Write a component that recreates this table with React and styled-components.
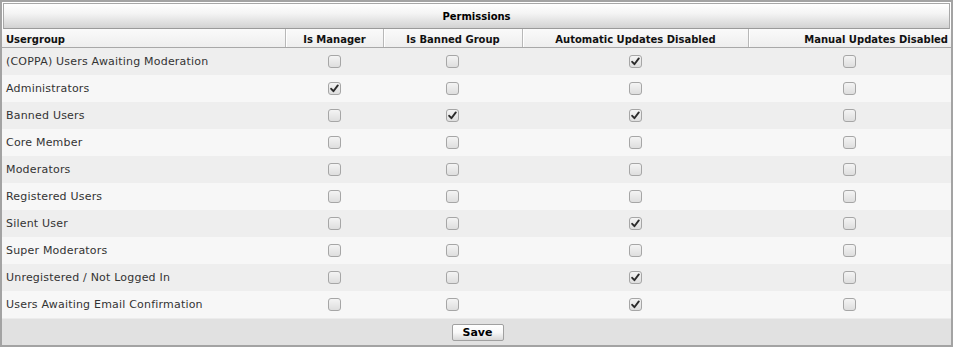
import React from "react";
import styled, { createGlobalStyle } from "styled-components";

const Global = createGlobalStyle`
  html, body { margin: 0; padding: 0; background: #ffffff; }
  body { font-family: "DejaVu Sans", Verdana, sans-serif; }
`;

const Frame = styled.div`
  width: 949px;
  border: 2px solid #a3a3a3;
  background: #ffffff;
  padding-top: 1px;
  font-family: "DejaVu Sans", Verdana, sans-serif;
  color: #333;
`;

const TitleBar = styled.div`
  margin: 0 1px;
  height: 26px;
  padding-top: 1px;
  box-sizing: border-box;
  border: 1px solid #a8a8a8;
  border-bottom-color: #9a9a9a;
  background: linear-gradient(#ffffff 0%, #f4f4f4 40%, #d2d2d2 100%);
  display: flex;
  align-items: center;
  justify-content: center;
  font-weight: bold;
  font-size: 10px;
  color: #000;
`;

const cols = "283px 98px 139px 226px 1fr";

const HeadRow = styled.div`
  display: grid;
  grid-template-columns: ${cols};
  height: 18px;
  background: linear-gradient(#fafafa, #eeeeee);
  border-bottom: 1px solid #a8a8a8;
`;

const HeadCell = styled.div`
  display: flex;
  align-items: center;
  justify-content: ${(p) => p.$align || "center"};
  padding: 2px ${(p) => (p.$align === "flex-end" ? "3px" : "4px")} 0;
  font-size: 10px;
  font-weight: bold;
  color: #111;
  border-left: ${(p) => (p.$first ? "none" : "1px solid #b8b8b8")};
  box-shadow: ${(p) => (p.$first ? "none" : "inset 1px 0 0 #ffffff")};
  white-space: nowrap;
`;

const Row = styled.div`
  display: grid;
  grid-template-columns: ${cols};
  height: 27px;
  background: ${(p) => (p.$alt ? "#f7f7f7" : "#eeeeee")};
`;

const NameCell = styled.div`
  display: flex;
  align-items: center;
  padding-left: 4px;
  font-size: 11px;
  color: #333;
  letter-spacing: 0.2px;
  white-space: nowrap;
`;

const BoxCell = styled.div`
  display: flex;
  align-items: center;
  justify-content: center;
`;

const Box = styled.span`
  width: 11px;
  height: 11px;
  border: 1px solid #a6a6a6;
  border-radius: 3px;
  background: linear-gradient(#f4f4f4, #dedede);
  display: flex;
  align-items: center;
  justify-content: center;
  box-sizing: content-box;
`;

const Footer = styled.div`
  height: 26px;
  background: #e1e1e1;
  display: flex;
  align-items: center;
  justify-content: center;
  border-top: 1px solid #ececec;
`;

const SaveButton = styled.button`
  width: 52px;
  height: 17px;
  padding: 0;
  margin-left: 2px;
  border: 1px solid #a0a0a0;
  border-radius: 2px;
  background: linear-gradient(#ffffff 0%, #f8f8f8 50%, #d8d8d8 100%);
  font-family: "DejaVu Sans", Verdana, sans-serif;
  font-size: 11px;
  font-weight: bold;
  color: #000;
`;

const Check = () => (
  <svg width="9" height="9" viewBox="0 0 9 9">
    <path d="M1.2 4.8 L3.4 7.2 L7.8 1.4" fill="none" stroke="#2b2b2b" strokeWidth="1.9" strokeLinecap="round" strokeLinejoin="round" />
  </svg>
);

const CheckBox = ({ on }) => <Box>{on ? <Check /> : null}</Box>;

const rows = [
  ["(COPPA) Users Awaiting Moderation", 0, 0, 1, 0],
  ["Administrators", 1, 0, 0, 0],
  ["Banned Users", 0, 1, 1, 0],
  ["Core Member", 0, 0, 0, 0],
  ["Moderators", 0, 0, 0, 0],
  ["Registered Users", 0, 0, 0, 0],
  ["Silent User", 0, 0, 1, 0],
  ["Super Moderators", 0, 0, 0, 0],
  ["Unregistered / Not Logged In", 0, 0, 1, 0],
  ["Users Awaiting Email Confirmation", 0, 0, 1, 0],
];

export default function App() {
  return (
    <>
      <Global />
      <Frame>
        <TitleBar>Permissions</TitleBar>
        <HeadRow>
          <HeadCell $first $align="flex-start">Usergroup</HeadCell>
          <HeadCell>Is Manager</HeadCell>
          <HeadCell>Is Banned Group</HeadCell>
          <HeadCell>Automatic Updates Disabled</HeadCell>
          <HeadCell $align="flex-end">Manual Updates Disabled</HeadCell>
        </HeadRow>
        {rows.map(([name, a, b, c, d], i) => (
          <Row key={name} $alt={i % 2 === 1}>
            <NameCell>{name}</NameCell>
            <BoxCell><CheckBox on={a} /></BoxCell>
            <BoxCell><CheckBox on={b} /></BoxCell>
            <BoxCell><CheckBox on={c} /></BoxCell>
            <BoxCell><CheckBox on={d} /></BoxCell>
          </Row>
        ))}
        <Footer>
          <SaveButton>Save</SaveButton>
        </Footer>
      </Frame>
    </>
  );
}
